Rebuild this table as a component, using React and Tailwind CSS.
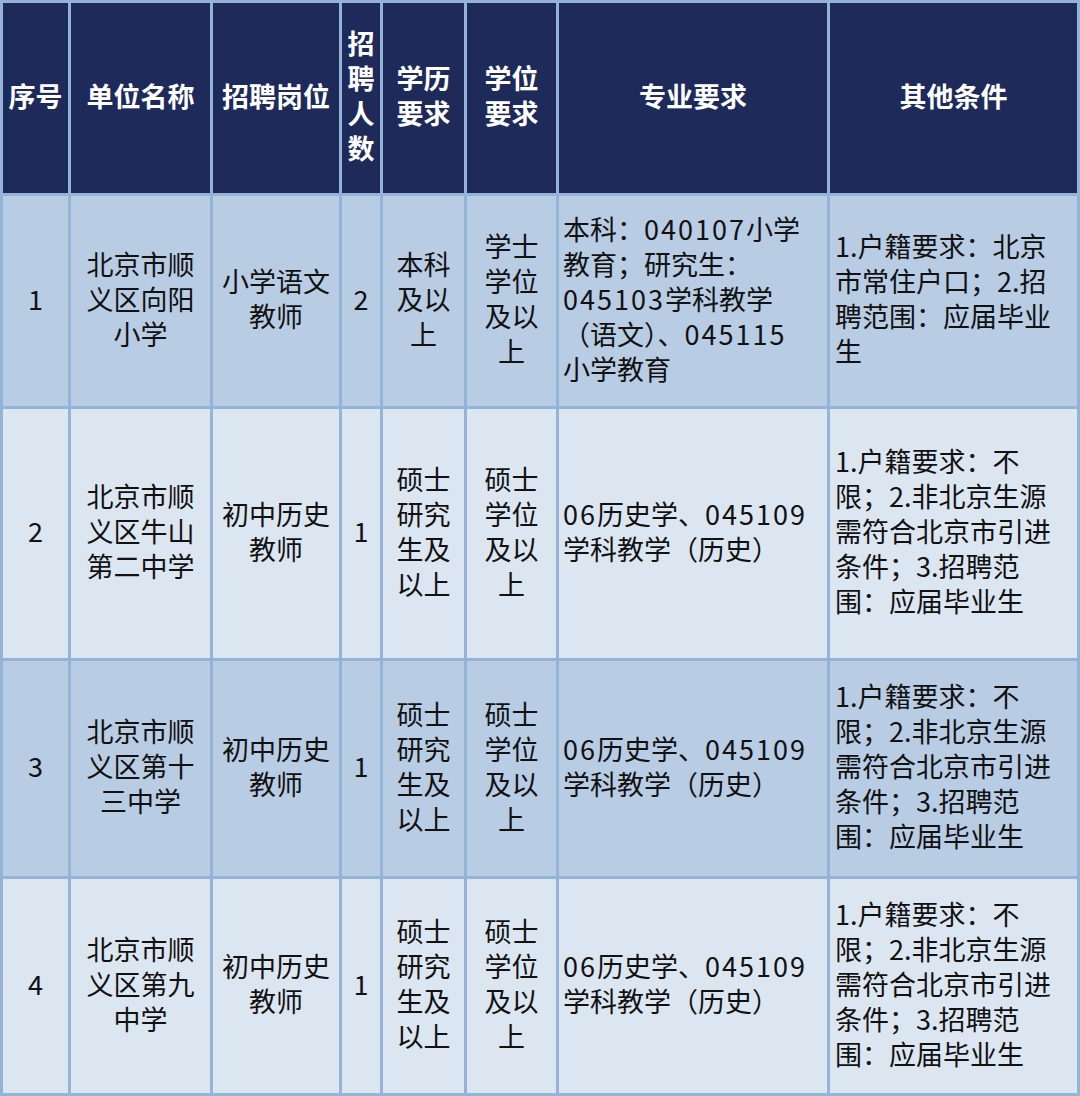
import React from "react";

const font = { fontFamily: '"Noto Sans CJK SC", "Noto Sans", sans-serif' };

const D = ({ children }) => <span className="tracking-[2px]">{children}</span>;

const header = [
  { t: ["序号"] },
  { t: ["单位名称"] },
  { t: ["招聘岗位"] },
  { t: ["招", "聘", "人", "数"] },
  { t: ["学历", "要求"] },
  { t: ["学位", "要求"] },
  { t: ["专业要求"] },
  { t: ["其他条件"] },
];

const otherB = [
  <>1.户籍要求：不</>,
  <>限；2.非北京生源</>,
  <>需符合北京市引进</>,
  <>条件；3.招聘范</>,
  <>围：应届毕业生</>,
];

const rows = [
  {
    bg: "bg-[#b8cce4]",
    cells: [
      ["1"],
      ["北京市顺", "义区向阳", "小学"],
      ["小学语文", "教师"],
      ["2"],
      ["本科", "及以", "上"],
      ["学士", "学位", "及以", "上"],
    ],
    major: [
      <>本科：<D>040107</D>小学</>,
      <>教育；研究生：</>,
      <><D>045103</D>学科教学</>,
      <>（语文）、<D>045115</D></>,
      <>小学教育</>,
    ],
    other: [
      <>1.户籍要求：北京</>,
      <>市常住户口；2.招</>,
      <>聘范围：应届毕业</>,
      <>生</>,
    ],
  },
  {
    bg: "bg-[#dce6f1]",
    cells: [
      ["2"],
      ["北京市顺", "义区牛山", "第二中学"],
      ["初中历史", "教师"],
      ["1"],
      ["硕士", "研究", "生及", "以上"],
      ["硕士", "学位", "及以", "上"],
    ],
    major: [<><D>06</D>历史学、<D>045109</D></>, <>学科教学（历史）</>],
    other: otherB,
  },
  {
    bg: "bg-[#b8cce4]",
    cells: [
      ["3"],
      ["北京市顺", "义区第十", "三中学"],
      ["初中历史", "教师"],
      ["1"],
      ["硕士", "研究", "生及", "以上"],
      ["硕士", "学位", "及以", "上"],
    ],
    major: [<><D>06</D>历史学、<D>045109</D></>, <>学科教学（历史）</>],
    other: otherB,
  },
  {
    bg: "bg-[#dce6f1]",
    cells: [
      ["4"],
      ["北京市顺", "义区第九", "中学"],
      ["初中历史", "教师"],
      ["1"],
      ["硕士", "研究", "生及", "以上"],
      ["硕士", "学位", "及以", "上"],
    ],
    major: [<><D>06</D>历史学、<D>045109</D></>, <>学科教学（历史）</>],
    other: otherB,
  },
];

function Lines({ lines }) {
  return (
    <div>
      {lines.map((l, i) => (
        <div key={i} className="whitespace-nowrap">
          {l}
        </div>
      ))}
    </div>
  );
}

export default function App() {
  return (
    <div
      style={font}
      className="w-[1080px] h-[1096px] overflow-hidden bg-[#95b3d7] p-[3px] grid gap-[3px] grid-cols-[65px_139px_126px_38px_81px_89px_268px_247px] grid-rows-[190px_210px_249px_215px_214px] text-[27px] leading-[35px]"
    >
      {header.map((h, i) => (
        <div
          key={"h" + i}
          className="bg-[#1e2b5a] text-white font-bold flex items-center justify-center text-center pb-[6px]"
        >
          <Lines lines={h.t} />
        </div>
      ))}
      {rows.map((r, ri) => (
        <React.Fragment key={ri}>
          {r.cells.map((c, ci) => (
            <div
              key={ci}
              className={`${r.bg} text-[#111] flex items-center justify-center text-center pb-[6px]`}
            >
              <Lines lines={c} />
            </div>
          ))}
          <div className={`${r.bg} text-[#111] flex items-center pl-[4px] pb-[6px]`}>
            <Lines lines={r.major} />
          </div>
          <div className={`${r.bg} text-[#111] flex items-center pl-[5px] pb-[6px]`}>
            <Lines lines={r.other} />
          </div>
        </React.Fragment>
      ))}
    </div>
  );
}
